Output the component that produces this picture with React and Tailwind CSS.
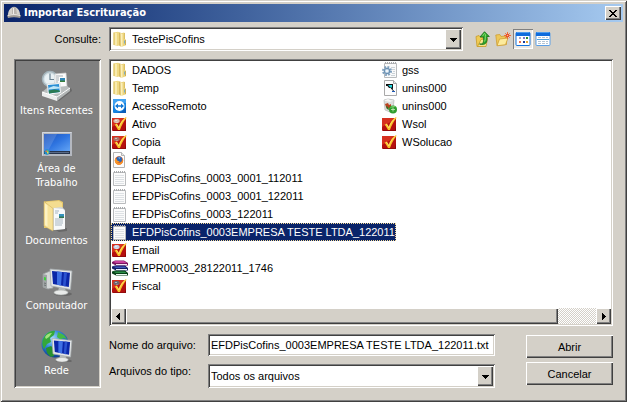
import { useState } from "react";

const RAISED = "bg-[#d4d0c8] shadow-[inset_1px_1px_0_#fff,inset_-1px_-1px_0_#404040,inset_-2px_-2px_0_#808080]";
const SUNKEN = "bg-white shadow-[inset_1px_1px_0_#808080,inset_-1px_-1px_0_#fff,inset_2px_2px_0_#404040,inset_-2px_-2px_0_#d4d0c8]";

/* ---------- file icons, 16x16 ---------- */

function FolderIcon() {
  return (
    <svg width="16" height="16" viewBox="0 0 16 16" className="shrink-0">
      <path d="M1.500 1.500L6 .7l1.500.8V14L6 15l-4.500-1z" fill="#efd983" />
      <path d="M1.500 1.500h1V14h-1z" fill="#e0c66c" />
      <path d="M3 2h2v12H3z" fill="#f8ebb0" />
      <path d="M7 1.500h1.500L9 15.500l-2-1z" fill="#d8bb60" />
      <path d="M8.500 2.500L12 1.500l1 .7V8l1 .8v5.500l-3.500 1.200h-2z" fill="#ecd47c" />
      <path d="M9 3h1.500v12H9z" fill="#fbf0bc" />
      <path d="M12 2h1v6h-1z" fill="#dcbf64" />
      <path d="M13 9h1v5h-1z" fill="#cfae50" />
      <path d="M12 9.500h1v3h-1z" fill="#7fb0c4" />
    </svg>
  );
}

function RemoteIcon() {
  return (
    <svg width="16" height="16" viewBox="0 0 16 16" className="shrink-0">
      <rect x="1" y="1" width="13" height="14" rx="1" fill="#1683e0" />
      <path d="M14 2v13H3c6 0 10-3 11-7z" fill="#0a5db8" />
      <path d="M1 2c0-.6.400-1 1-1h11c.6 0 1 .4 1 1v3C9 4 4 5 1 8z" fill="#41a2f0" />
      <circle cx="7.500" cy="8" r="5" fill="#fff" />
      <path d="M3 8l3-2.500v1.700h3V5.500L12 8l-3 2.500V8.800H6v1.700z" fill="#1478d4" />
    </svg>
  );
}

function CheckIcon({ badge }) {
  return (
    <svg width="16" height="16" viewBox="0 0 16 16" className="shrink-0">
      <rect x="0" y="2" width="14" height="13" rx="1" fill="#b51010" />
      <path d="M0 3c0-.6.400-1 1-1h11v2L0 11z" fill="#d6301f" />
      <path d="M1 14.500h12l1-5v5l-.5.500H1z" fill="#780505" />
      <path d="M2.500 8.800L4.800 7.500l2 3.200C8 6.500 10.300 3.300 14 1l.5 1C11.500 5.500 9.500 9.500 8 14H6C5 12 4 10.200 2.500 8.800z" fill="#f8c024" />
      <path d="M3.800 9L5 8.500l1.900 3.500C8.300 7.500 10.500 4.500 13.500 2" fill="none" stroke="#ffea80" strokeWidth=".7" />
      {badge && <path d="M1.500 4.500L3 3h3l1.500 1v2L6 7H3L1.500 6z" fill={badge} />}
      {badge && <path d="M3 4h2v1H3zM4 6h2v.6H4z" fill="#fff" opacity=".5" />}
    </svg>
  );
}

function FirefoxIcon() {
  return (
    <svg width="16" height="16" viewBox="0 0 16 16" className="shrink-0">
      <path d="M1.500.5h8l3 3v12h-11z" fill="#fdfdfd" stroke="#b4b4b4" />
      <path d="M9.500.5v3h3" fill="#e8e8e8" stroke="#b4b4b4" />
      <circle cx="7" cy="8.500" r="4.200" fill="#e35c19" />
      <circle cx="7.200" cy="7.300" r="2.900" fill="#2c68b8" />
      <path d="M6 5.500l2.500-.3L7.500 7z" fill="#86bdea" />
      <path d="M3 6.500l1.500.4 1 1.800 2.200.7c-.8 1-2 1-2.700.7.800 1.200 3.800 1.300 5-.8.400-1 .4-2.300 0-3 1.400 1.500 1.300 4-.2 5.400C7 14 3 12.500 2.800 9z" fill="#f7962a" />
    </svg>
  );
}

function NoteIcon() {
  return (
    <svg width="16" height="16" viewBox="0 0 16 16" className="shrink-0">
      <path d="M1.500 2.500h12v13h-12z" fill="#fbfbfb" stroke="#b9bbbd" />
      <path d="M3 5.500h9M3 7.500h9M3 9.500h9M3 11.500h9M3 13.500h9" stroke="#dde1e4" />
      <path d="M2.500 1v2M4.500 1v2M6.500 1v2M8.500 1v2M10.500 1v2M12.500 1v2" stroke="#a9abad" />
    </svg>
  );
}

function BooksIcon() {
  return (
    <svg width="16" height="16" viewBox="0 0 16 16" className="shrink-0">
      <path d="M0 2l3-1.500h9L16 3v2.500H4L0 3.500z" fill="#7d1560" />
      <path d="M1 1.800l2-.8h9l2.500 2H4z" fill="#c8409c" />
      <path d="M4 4h11v1H4z" fill="#f4e7f0" />
      <path d="M0 6.500L3 5.500h10L16 8v2.500H4L0 8.500z" fill="#141f66" />
      <path d="M1 6.500h11.500L14.500 8H4z" fill="#4054b8" />
      <path d="M4 9h11v1H4z" fill="#eceefa" />
      <path d="M0 11.500l3-1h10L16 13v2.500H4l-4-2z" fill="#083f18" />
      <path d="M1 11.500h11.500l2 1.500H4z" fill="#2d9048" />
      <path d="M4 14h11v1H4z" fill="#eafaf0" />
    </svg>
  );
}

function GearFileIcon() {
  return (
    <svg width="16" height="16" viewBox="0 0 16 16" className="shrink-0">
      <path d="M2.500 1.500h12v14h-12z" fill="#fafafa" stroke="#b9bbbd" />
      <path d="M3.500 0v2M5.500 0v2M7.500 0v2M9.500 0v2M11.500 0v2M13.500 0v2" stroke="#a9abad" />
      <path d="M9 5.500h4M10 7.500h3M11 9.500h2M10 11.500h3M9 13.500h4" stroke="#ccd3d8" />
      <circle cx="5" cy="9" r="4" fill="none" stroke="#7fa0be" strokeWidth="2" strokeDasharray="1.800 1.340" />
      <circle cx="5" cy="9" r="2.700" fill="#c9dcec" stroke="#6c91b3" strokeWidth="1.200" />
      <circle cx="5" cy="9" r="1" fill="#fff" />
    </svg>
  );
}

function UninstallDataIcon() {
  return (
    <svg width="16" height="16" viewBox="0 0 16 16" className="shrink-0">
      <path d="M2.500.5h9l3 3v12h-12z" fill="#fdfdfd" stroke="#a9a9a9" />
      <path d="M11.500.5v3h3" fill="#e4e4e4" stroke="#a9a9a9" />
      <path d="M4 4h7v5.500L9.500 8H7L5.500 6H4z" fill="#111" />
      <path d="M6 5h4v2.500H8L7 6z" fill="#20d6de" />
      <path d="M9 8l3 3.500" stroke="#111" />
      <path d="M10 11h3v1h-3z" fill="#1b58b8" />
    </svg>
  );
}

function UninstallIcon() {
  return (
    <svg width="16" height="16" viewBox="0 0 16 16" className="shrink-0">
      <path d="M2 2l4-1 6 1-1 11-3 1-5-2z" fill="#dcdedd" stroke="#b4b8b6" strokeWidth=".7" />
      <path d="M2 2.500L8 4l4-2-3 .4L6 1z" fill="#f6f6f6" />
      <path d="M3 6l3-1 1 2 2-1v4l-4 1-1-2z" fill="#b9431f" />
      <path d="M4 8l2 1 1 3-2-1z" fill="#267b2b" />
      <circle cx="11" cy="11.500" r="4" fill="#2f9e2f" />
      <path d="M8 10c1-2 4-3 6-1-2 0-4 0-6 1z" fill="#7ed46d" />
      <path d="M9 11.500h4M11 9.500v4" stroke="#c9efc0" strokeWidth=".8" />
    </svg>
  );
}

/* ---------- toolbar icons ---------- */

function UpIcon() {
  return (
    <svg width="16" height="16" viewBox="0 0 16 16">
      <path d="M1 5.500l3-1 1.500 1.500H8v9.500H2z" fill="#efcb55" stroke="#c89a28" strokeWidth=".8" />
      <path d="M2.500 15.500L6 8.500l6.500-1-1.500 8z" fill="#fae58c" stroke="#c89a28" strokeWidth=".8" />
      <path d="M4.500 13c3.500.5 4.500-1.500 4-7H5L9.500.7l4.800 4.800H12c.5 6.500-1.500 9-7.500 7.500z" fill="#2fa82c" stroke="#156f18" strokeWidth=".8" />
      <path d="M7.500 5.200l2-2.900 1 1.400c-.3 2 .2 4.800-1 6.800" fill="none" stroke="#86dd70" />
    </svg>
  );
}

function NewFolderIcon() {
  return (
    <svg width="16" height="16" viewBox="0 0 16 16">
      <path d="M.8 4l4-.5L6 5.500l5.500-.5v8.500l-9.500 1z" fill="#eec85a" stroke="#cf9f35" strokeWidth=".8" />
      <path d="M2 14.800L4.500 8l8.500-1-2.500 6.700z" fill="#fdeb9c" stroke="#cf9f35" strokeWidth=".8" />
      <path d="M12.500 1v7M9 4.500h7M10.200 2.200l4.600 4.600M14.800 2.200l-4.600 4.600" stroke="#f26a3c" />
      <circle cx="12.500" cy="4.500" r="1.700" fill="#e83c1c" />
      <circle cx="12.500" cy="4.500" r=".8" fill="#ffc98a" />
    </svg>
  );
}

function ListViewIcon() {
  return (
    <svg width="16" height="16" viewBox="0 0 16 16">
      <rect x="1" y="1.500" width="14" height="13" rx="1" fill="#fff" stroke="#1573dc" />
      <path d="M1 1h14v4H1z" fill="#0f6cdc" />
      <path d="M1.500 1.500h13" stroke="#4d9df0" />
      <path d="M4 6h2v2H4z" fill="#a5a5c8" />
      <path d="M8 6h2v2H8z" fill="#7a7acc" />
      <path d="M11 6h2v2h-2z" fill="#2e8b35" />
      <path d="M4 10h2v2H4z" fill="#ee6f50" />
      <path d="M8 10h2v2H8z" fill="#173c9c" />
      <path d="M11 10h2v2h-2z" fill="#e3a63a" />
    </svg>
  );
}

function DetailsViewIcon() {
  return (
    <svg width="16" height="16" viewBox="0 0 16 16">
      <rect x="1" y="1.500" width="14" height="13" rx="1" fill="#fff" stroke="#5c9fe6" />
      <path d="M1 1h14v4H1z" fill="#0f6cdc" />
      <path d="M1.500 1.500h13" stroke="#4d9df0" />
      <path d="M3 6.500h10M3 10.500h10M3 12.500h10" stroke="#b4c3d2" strokeDasharray="3 1" />
      <path d="M2 8.500h12" stroke="#55a3dc" />
    </svg>
  );
}

/* ---------- places icons, 32x32 ---------- */

function RecentIcon() {
  return (
    <svg width="32" height="32" viewBox="0 0 32 32">
      <path d="M14 29L30 18l1 3-13 10z" fill="#444" opacity=".4" />
      <circle cx="9" cy="9" r="7.500" fill="#cfdbe0" stroke="#a3b3ba" strokeWidth="1.500" />
      <circle cx="9" cy="9" r="5.500" fill="#e9f1f4" />
      <path d="M9 3.500V9.500h4" fill="none" stroke="#6b8291" strokeWidth="1.200" />
      <path d="M14 4l11-1 1 14-12 2z" fill="#fbfbfb" stroke="#cfcfcf" strokeWidth=".7" />
      <path d="M15 6h7M15 8h3M15 10h3M15 12h2" stroke="#a5adb3" />
      <path d="M19 8h5v4h-5z" fill="#2f86b8" />
      <path d="M19 10.500h5V12h-5z" fill="#3b7f3b" />
      <path d="M1 22l5-4 20-2 3 2-13 10z" fill="#b9bdbd" />
      <path d="M6 14l13-1 1 10-13 2z" fill="#fff" stroke="#cdd3d5" strokeWidth=".6" />
      <path d="M7 15l11-1 .8 8L8 23.500z" fill="#2b8fd4" />
      <path d="M7.500 18l5-2 6 1v1.500l-10.800 1z" fill="#bfe6f7" />
      <path d="M7.600 20.500l6-1 5 1 .3 1.600L8 23.500z" fill="#2a7a52" />
      <path d="M1 22l15 5v4L1 26z" fill="#eceded" />
      <path d="M16 27l13-9v3l-13 10z" fill="#b2b6b6" />
      <path d="M1 22l15 5 13-9" fill="none" stroke="#fff" />
    </svg>
  );
}

function DesktopIcon() {
  return (
    <svg width="32" height="32" viewBox="0 0 32 32">
      <defs>
        <linearGradient id="desk" x1="0" y1="0" x2="1" y2="1">
          <stop offset="0" stopColor="#1d50b8" />
          <stop offset=".5" stopColor="#2e74e0" />
          <stop offset="1" stopColor="#63a4f5" />
        </linearGradient>
      </defs>
      <path d="M1 4h30v24H1z" fill="#b4b8c0" />
      <path d="M1.500 27.500v-23h29" fill="none" stroke="#d3d7de" />
      <path d="M3 6h26v17H3z" fill="url(#desk)" />
      <path d="M3 6h13L7 23H3z" fill="#fff" opacity=".14" />
      <path d="M3 23h26v3H3z" fill="#28354c" />
      <path d="M8 24.500h20" stroke="#5a6a86" />
      <circle cx="6" cy="24" r="2.700" fill="#1c8fcb" />
      <path d="M4.500 22.500H6V24H4.500z" fill="#ef6a3d" />
      <path d="M6 22.500h1.500V24H6z" fill="#8dd04b" />
      <path d="M6 24h1.500v1.500H6z" fill="#f8d545" />
    </svg>
  );
}

function DocumentsIcon() {
  return (
    <svg width="32" height="32" viewBox="0 0 32 32">
      <path d="M13 29l13-1v3l-8 1z" fill="#444" opacity=".4" />
      <path d="M3 1.500L18 0l4 2v26H3z" fill="#e6c76b" />
      <path d="M5 2l13-1 3 2v21H6z" fill="#f4dd90" />
      <path d="M12 8l9-1 3 3v19l-12 1z" fill="#cfd4d8" />
      <path d="M13 8l9 1 2 2v18l-11 1z" fill="#f7f9fa" />
      <path d="M14 11h4M14 13h3M14 19h8M14 21h8M14 23h8M14 25h7" stroke="#a7b5c0" />
      <path d="M18 14h5v4h-5z" fill="#3592bd" />
      <path d="M18 16.500h5V18h-5z" fill="#35774d" />
      <path d="M3 1.500l9 7V31l-9-5z" fill="#f7e29a" stroke="#d3b35a" strokeWidth=".6" />
      <path d="M4 3.500l2.500 2v21L4 25z" fill="#fdf2c2" />
    </svg>
  );
}

function Monitor() {
  return (
    <>
      <ellipse cx="22" cy="29" rx="9" ry="2" fill="#444" opacity=".4" />
      <path d="M18 22l6 1 1 4h-8z" fill="#b6bab9" />
      <ellipse cx="20" cy="27.500" rx="7" ry="2.500" fill="#e9ebea" stroke="#a3a7a6" strokeWidth=".6" />
      <path d="M9 4l22 2-1.500 18.500L10 21z" fill="#e4e7e7" stroke="#a6acae" strokeWidth=".8" />
      <path d="M11 6l18 1.700L27.800 22 12 19z" fill="#0b27a8" />
      <path d="M16 6.500l5 .5-1 13.500-4-.8z" fill="#3f70e4" />
      <path d="M23 7.200l3 .3-1.500 14-2.500-.5z" fill="#2b53cf" />
    </>
  );
}

function ComputerIcon() {
  return (
    <svg width="32" height="32" viewBox="0 0 32 32">
      <path d="M2 9l7-3 3 1v16l-5 1-5-2z" fill="#d4d7d7" stroke="#989d9d" strokeWidth=".8" />
      <path d="M2 9l4 1v14l-4-2z" fill="#a0a5a5" />
      <path d="M3 12l2 .5v3L3 15z" fill="#3fcf3f" />
      <path d="M3 18l2 .5M3 20l2 .5" stroke="#6d7272" />
      <Monitor />
    </svg>
  );
}

function NetworkIcon() {
  return (
    <svg width="32" height="32" viewBox="0 0 32 32">
      <defs>
        <radialGradient id="globe" cx=".4" cy=".3" r=".7">
          <stop offset="0" stopColor="#a5dcff" />
          <stop offset=".5" stopColor="#2f86d8" />
          <stop offset="1" stopColor="#0c3d92" />
        </radialGradient>
      </defs>
      <circle cx="14" cy="14" r="13.500" fill="url(#globe)" />
      <path d="M3 7c3-5 8-7 11-6l-1 4-4 3 1 4-4 2-3 5C.5 15 1 10 3 7z" fill="#35a83a" />
      <path d="M17 2l6 3 3 4-4-1-2 2-4-3z" fill="#43b947" />
      <path d="M5 18l5-2 4 4-1 6-3 1c-3-2-5-5-5-9z" fill="#27912f" />
      <path d="M4 7c2-3 4-4 7-4L8 7l-3 2z" fill="#a2e27c" />
      <g transform="translate(3 5) scale(.9)">
        <Monitor />
      </g>
    </svg>
  );
}

function HelmetIcon() {
  return (
    <svg width="16" height="16" viewBox="0 0 16 16" aria-hidden="true">
      <path d="M2 10C2 5 5 2 8 2s6 3 6 8z" fill="#d6d2cc" />
      <path d="M6 2.500c1-1 3-1 4 0l1 7H6z" fill="#b9b4ae" />
      <path d="M7 3h1v6H7z" fill="#efedea" />
      <path d="M1 10c4-1.500 10-1.500 14 0l-1 3c-4-1-8-1-12 0z" fill="#a09b95" />
      <path d="M2 10.500c4-1.200 8-1.200 12 0" fill="none" stroke="#efece8" />
    </svg>
  );
}

function Arrow({ d }) {
  return (
    <svg width="7" height="7" viewBox="0 0 7 7" shapeRendering="crispEdges">
      <path d={d} fill="#000" />
    </svg>
  );
}

const DOWN = "M0 2h7v1H6v1H5v1H4v1H3V5H2V4H1V3H0z";
const LEFT = "M5 0v7H4V6H3V5H2V4H1V3h1V2h1V1h1V0z";
const RIGHT = "M2 0v7h1V6h1V5h1V4h1V3H5V2H4V1H3V0z";

const files = [
  { name: "DADOS", icon: <FolderIcon /> },
  { name: "Temp", icon: <FolderIcon /> },
  { name: "AcessoRemoto", icon: <RemoteIcon /> },
  { name: "Ativo", icon: <CheckIcon badge="#d8b9a8" /> },
  { name: "Copia", icon: <CheckIcon badge="#a8746a" /> },
  { name: "default", icon: <FirefoxIcon /> },
  { name: "EFDPisCofins_0003_0001_112011", icon: <NoteIcon /> },
  { name: "EFDPisCofins_0003_0001_122011", icon: <NoteIcon /> },
  { name: "EFDPisCofins_0003_122011", icon: <NoteIcon /> },
  { name: "EFDPisCofins_0003EMPRESA TESTE LTDA_122011", icon: <NoteIcon /> },
  { name: "Email", icon: <CheckIcon badge="#c9d3e6" /> },
  { name: "EMPR0003_28122011_1746", icon: <BooksIcon /> },
  { name: "Fiscal", icon: <CheckIcon badge="#6d6470" /> },
  { name: "gss", icon: <GearFileIcon /> },
  { name: "unins000", icon: <UninstallDataIcon /> },
  { name: "unins000", icon: <UninstallIcon /> },
  { name: "Wsol", icon: <CheckIcon /> },
  { name: "WSolucao", icon: <CheckIcon /> },
];

function Place({ icon, children }) {
  return (
    <button className="flex w-full flex-col items-center gap-[2px] text-center font-['DejaVu_Sans_Condensed','DejaVu_Sans',sans-serif] text-[11px] leading-[14px] text-white">
      {icon}
      <span>{children}</span>
    </button>
  );
}

function Combo({ id, icon, children }) {
  return (
    <div className={`relative flex h-6 items-center p-[2px] ${SUNKEN}`}>
      {icon && <span className="pl-px">{icon}</span>}
      <select id={id} className={`h-5 min-w-0 flex-1 appearance-none bg-transparent outline-none ${icon ? "pl-1" : "pl-px"}`}>
        {children}
      </select>
      <span className={`pointer-events-none flex h-5 w-4 items-center justify-center ${RAISED}`}>
        <Arrow d={DOWN} />
      </span>
    </div>
  );
}

function ToolButton({ label, active, children }) {
  return (
    <button
      aria-label={label}
      className={`flex size-5 items-center justify-center ${active ? "bg-[#ece9e4] shadow-[inset_1px_1px_0_#808080,inset_-1px_-1px_0_#fff]" : ""}`}
    >
      {children}
    </button>
  );
}

export default function App() {
  const [selected, setSelected] = useState(9);
  const [filename, setFilename] = useState("EFDPisCofins_0003EMPRESA TESTE LTDA_122011.txt");

  const pick = (i) => {
    setSelected(i);
    setFilename(files[i].name);
  };

  return (
    <div className="flex min-h-screen w-full flex-col bg-[#d4d0c8] p-1 font-['Liberation_Sans',Arial,sans-serif] text-[11px] leading-[14px] text-black shadow-[inset_1px_1px_0_#d4d0c8,inset_-1px_-1px_0_#404040,inset_2px_2px_0_#fff,inset_-2px_-2px_0_#808080]">
      <header className="flex h-[18px] items-center gap-[2px] bg-linear-to-r from-[#0a246a] to-[#a6caf0] px-[2px]">
        <HelmetIcon />
        <h1 className="flex-1 font-['DejaVu_Sans_Condensed','DejaVu_Sans',sans-serif] text-[11px] leading-4 font-bold text-white">
          Importar Escrituração
        </h1>
        <button aria-label="Fechar" className={`flex h-[14px] w-4 items-center justify-center ${RAISED}`}>
          <svg width="8" height="7" viewBox="0 0 8 7" shapeRendering="crispEdges">
            <path d="M0 0h2v1h1v1h2V1h1V0h2v1H7v1H6v1H5v1h1v1h1v1h1v1H6V6H5V5H3v1H2v1H0V6h1V5h1V4h1V3H2V2H1V1H0z" fill="#000" />
          </svg>
        </button>
      </header>

      <div className="flex items-center px-[10px] pt-[5px] pb-2">
        <label htmlFor="folder" className="w-[95px] pr-2 text-right">
          Consulte:
        </label>
        <div className="flex-1">
          <Combo id="folder" icon={<FolderIcon />}>
            <option>TestePisCofins</option>
          </Combo>
        </div>
        <div className="mr-[60px] ml-[10px] flex">
          <ToolButton label="Um nível acima"><UpIcon /></ToolButton>
          <ToolButton label="Nova pasta"><NewFolderIcon /></ToolButton>
          <ToolButton label="Lista" active><ListViewIcon /></ToolButton>
          <ToolButton label="Detalhes"><DetailsViewIcon /></ToolButton>
        </div>
      </div>

      <div className="flex flex-1 gap-2 px-[10px] pb-[10px]">
        <nav className="flex w-[87px] flex-col gap-[17px] bg-[#808080] pt-[11px] pr-[2px] shadow-[inset_1px_1px_0_#808080,inset_-1px_-1px_0_#fff,inset_2px_2px_0_#404040,inset_-2px_-2px_0_#d4d0c8]">
          <div className="flex flex-col gap-[10px]">
            <Place icon={<RecentIcon />}>Itens Recentes</Place>
            <Place icon={<DesktopIcon />}>Área de<br />Trabalho</Place>
            <Place icon={<DocumentsIcon />}>Documentos</Place>
          </div>
          <Place icon={<ComputerIcon />}>Computador</Place>
          <Place icon={<NetworkIcon />}>Rede</Place>
        </nav>

        <main className="flex min-w-0 flex-1 flex-col gap-2">
          <div className={`flex flex-1 flex-col p-[2px] ${SUNKEN}`}>
            <ul className="grid flex-1 auto-cols-[270px] grid-flow-col grid-rows-[repeat(13,18px)] overflow-hidden">
              {files.map((file, i) => (
                <li key={i}>
                  <button
                    onClick={() => pick(i)}
                    className={`flex h-[18px] w-max items-center gap-1 pr-px pl-px text-left whitespace-nowrap ${
                      i === selected ? "bg-[#0a246a] text-white outline outline-dotted -outline-offset-1 outline-[#f5db95]" : ""
                    }`}
                  >
                    {file.icon}
                    <span>{file.name}</span>
                  </button>
                </li>
              ))}
            </ul>
            <div className="flex h-4 bg-[repeating-conic-gradient(#fff_0_25%,#d4d0c8_0_50%)] bg-[length:2px_2px]">
              <button aria-label="Rolar para a esquerda" className={`flex w-4 items-center justify-center ${RAISED}`}>
                <Arrow d={LEFT} />
              </button>
              <div className={`w-[92%] ${RAISED}`} />
              <div className="w-[8%]" />
              <button aria-label="Rolar para a direita" className={`flex w-4 items-center justify-center ${RAISED}`}>
                <Arrow d={RIGHT} />
              </button>
            </div>
          </div>

          <form className="flex gap-[31px]" onSubmit={(e) => e.preventDefault()}>
            <div className="grid flex-1 grid-cols-[99px_1fr] gap-y-2">
              <label htmlFor="filename" className="pt-1">Nome do arquivo:</label>
              <input
                id="filename"
                value={filename}
                onChange={(e) => setFilename(e.target.value)}
                className={`h-[22px] min-w-0 px-[3px] outline-none ${SUNKEN}`}
              />
              <label htmlFor="filetype">Arquivos do tipo:</label>
              <Combo id="filetype">
                <option>Todos os arquivos</option>
              </Combo>
            </div>
            <div className="flex w-[87px] flex-col gap-1 pt-px">
              <button type="submit" className={`h-[23px] ${RAISED}`}>Abrir</button>
              <button type="button" className={`h-[23px] ${RAISED}`}>Cancelar</button>
            </div>
          </form>
        </main>
      </div>
    </div>
  );
}
